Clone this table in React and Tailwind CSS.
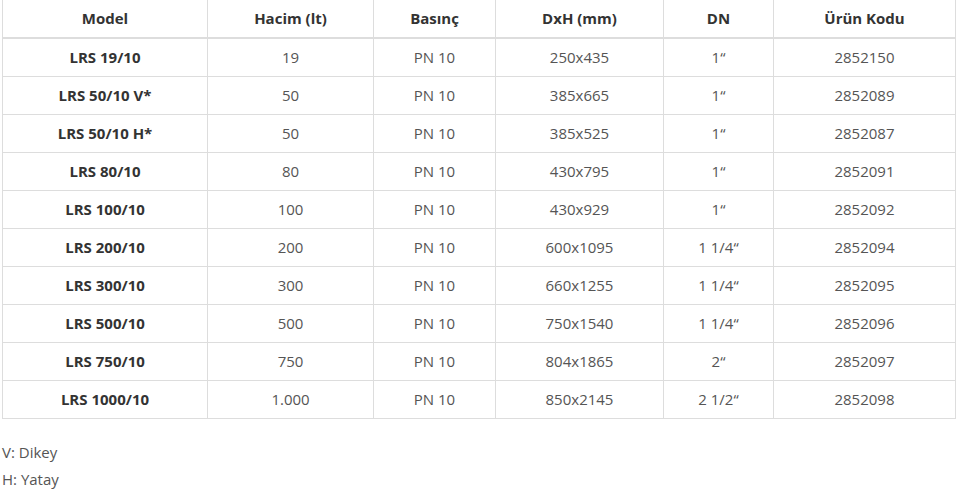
const rows = [
  ['LRS 19/10', '19', 'PN 10', '250x435', '1“', '2852150'],
  ['LRS 50/10 V*', '50', 'PN 10', '385x665', '1“', '2852089'],
  ['LRS 50/10 H*', '50', 'PN 10', '385x525', '1“', '2852087'],
  ['LRS 80/10', '80', 'PN 10', '430x795', '1“', '2852091'],
  ['LRS 100/10', '100', 'PN 10', '430x929', '1“', '2852092'],
  ['LRS 200/10', '200', 'PN 10', '600x1095', '1 1/4“', '2852094'],
  ['LRS 300/10', '300', 'PN 10', '660x1255', '1 1/4“', '2852095'],
  ['LRS 500/10', '500', 'PN 10', '750x1540', '1 1/4“', '2852096'],
  ['LRS 750/10', '750', 'PN 10', '804x1865', '2“', '2852097'],
  ['LRS 1000/10', '1.000', 'PN 10', '850x2145', '2 1/2“', '2852098'],
];

const headers = ['Model', 'Hacim (lt)', 'Basınç', 'DxH (mm)', 'DN', 'Ürün Kodu'];
const widths = ['w-[205px]', 'w-[166px]', 'w-[122px]', 'w-[168px]', 'w-[110px]', 'w-[182px]'];

export default function App() {
  return (
    <div className="bg-white min-h-[493px] font-['Open_Sans',sans-serif] text-[15px] text-[#555]">
      <table className="ml-[2px] w-[954px] table-fixed border-collapse">
        <colgroup>
          {widths.map((w, i) => (
            <col key={i} className={w} />
          ))}
        </colgroup>
        <thead>
          <tr className="h-[38px]">
            {headers.map((h) => (
              <th key={h} className="border-x border-b-2 border-[#ddd] text-center font-bold text-[#333] p-0">
                {h}
              </th>
            ))}
          </tr>
        </thead>
        <tbody>
          {rows.map((r) => (
            <tr key={r[0]} className="h-[38px]">
              {r.map((c, i) => (
                <td
                  key={i}
                  className={
                    'border border-[#ddd] text-center p-0 ' + (i === 0 ? 'font-bold text-[#333]' : '')
                  }
                >
                  {c}
                </td>
              ))}
            </tr>
          ))}
        </tbody>
      </table>
      <div className="mt-[20px] ml-[2px] leading-[27px]">
        <p>V: Dikey</p>
        <p>H: Yatay</p>
      </div>
    </div>
  );
}
